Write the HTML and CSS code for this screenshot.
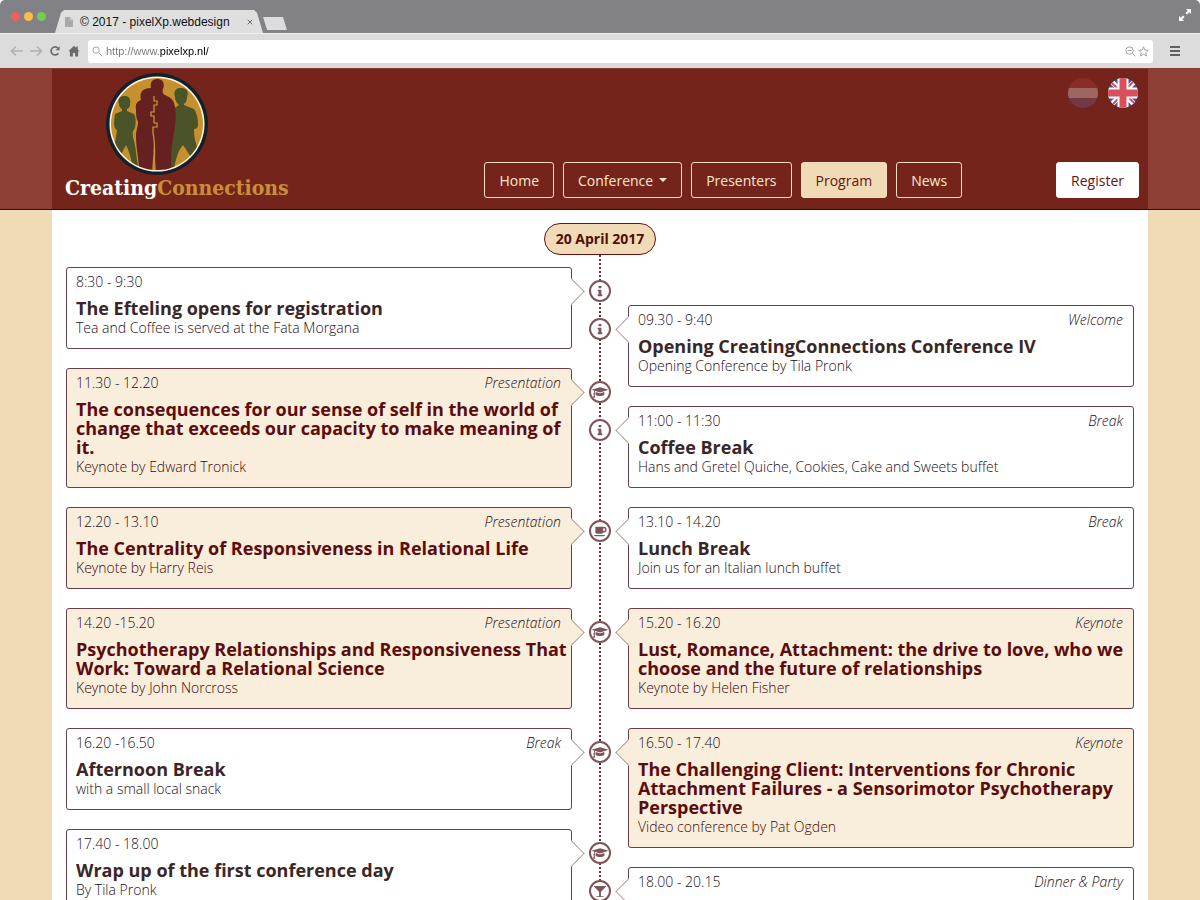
FILE: index.html
```html
<!DOCTYPE html>
<html lang="en">
<head>
<meta charset="utf-8">
<title>Creating Connections - Program</title>
<link rel="stylesheet" href="styles.css">
</head>
<body>
<svg class="sprite" aria-hidden="true">
  <symbol id="info" viewBox="-576 0 1792 1792"><path d="M640 1344v128q0 26-19 45t-45 19h-512q-26 0-45-19t-19-45v-128q0-26 19-45t45-19h64v-384h-64q-26 0-45-19t-19-45v-128q0-26 19-45t45-19h384q26 0 45 19t19 45v576h64q26 0 45 19t19 45zm-128-1152v192q0 26-19 45t-45 19h-256q-26 0-45-19t-19-45v-192q0-26 19-45t45-19h256q26 0 45 19t19 45z"/></symbol>
  <symbol id="cap" viewBox="0 0 2304 1792"><path d="M1774 836l18 316q4 69-82 128t-235 93.5-323 34.5-323-34.5-235-93.5-82-128l18-316 574 181q22 7 48 7t48-7zm530-324q0 23-22 31l-1120 352q-4 1-10 1t-10-1l-652-206q-43 34-71 111.5t-34 178.5q63 36 63 109 0 69-58 107l58 433q2 14-8 25-9 11-24 11h-192q-15 0-24-11-10-11-8-25l58-433q-58-38-58-107 0-73 65-111 11-207 98-330l-333-104q-22-8-22-31t22-31l1120-352q4-1 10-1t10 1l1120 352q22 8 22 31z"/></symbol>
  <symbol id="cup" viewBox="0 0 14 14"><path fill-rule="evenodd" d="M2 2h9a3 3 0 0 1 0 6h-.6A2 2 0 0 1 8.500 9.500h-4.500a2 2 0 0 1-2-2zM10.500 3.500v3h.5a1.500 1.500 0 0 0 0-3zM.5 10.800h12a1.500 1.500 0 0 1-1.500 1.200H2a1.500 1.500 0 0 1-1.500-1.200z"/></symbol>
  <symbol id="glass" viewBox="0 0 14 14"><path d="M1 1h12c.5 0 .6.5.3.900L8 7.300v4.700h2.500c.6 0 .8 1 .2 1H3.300c-.6 0-.4-1 .2-1H6V7.300L.7 1.900C.4 1.500.5 1 1 1z"/></symbol>
</svg>

<div class="browser">
  <div class="titlebar">
    <div class="lights"><i class="light red"></i><i class="light amber"></i><i class="light green"></i></div>
    <div class="tab">
      <svg class="page-icon" viewBox="0 0 8 10"><path d="M0 0h5l3 3v7H0z" fill="#a9a9a9"/><path d="M5 0v3h3" fill="#d2d2d2"/></svg>
      <span class="tab-title">© 2017 - pixelXp.webdesign</span>
      <button class="tab-close" aria-label="Close tab"><svg viewBox="0 0 6 6"><path d="M.7.7l4.600 4.600M5.300.7L.7 5.300"/></svg></button>
    </div>
    <button class="new-tab" aria-label="New tab"></button>
    <button class="expand" aria-label="Full screen"><svg viewBox="0 0 14 14"><path d="M8 1h5v5l-1.700-1.700L9 6.600 7.400 5l2.300-2.300zM6 13H1V8l1.700 1.700L5 7.400 6.600 9l-2.300 2.300z" fill="#fff"/></svg></button>
  </div>
  <div class="toolbar">
    <button class="tool" aria-label="Back"><svg viewBox="0 0 14 12"><path d="M13 6H1.500M6 1.500L1.500 6 6 10.500" class="faint"/></svg></button>
    <button class="tool" aria-label="Forward"><svg viewBox="0 0 14 12"><path d="M1 6h11.500M8 1.500L12.500 6 8 10.500" class="faint"/></svg></button>
    <button class="tool" aria-label="Reload"><svg viewBox="0 0 12 12"><path d="M9 3.200A4 4 0 1 0 9.400 8.200" fill="none" stroke="#6b6b6b" stroke-width="1.700"/><path d="M10.600 1.200v4H6.600z" fill="#6b6b6b"/></svg></button>
    <button class="tool" aria-label="Home page"><svg viewBox="0 0 12 12"><path d="M6 .8L.4 6.200h1.500V11.500h3V8h2.200v3.500h3V6.200h1.500L9.800 4.400V1.500H8.200v1.400z" fill="#6b6b6b"/></svg></button>
    <div class="address">
      <svg class="search" viewBox="0 0 12 12"><circle cx="4.500" cy="4.500" r="3.500"/><path d="M7.200 7.200l4 4"/></svg>
      <input class="url" type="text" value="http://www.pixelxp.nl/" aria-label="Address">
      <svg class="search" viewBox="0 0 12 12"><circle cx="5" cy="5" r="4"/><path d="M3 5h4M8 8l3.200 3.200"/></svg>
      <svg class="star" viewBox="0 0 12 12"><path d="M6 .9l1.500 3.500 3.800.3-2.900 2.500.9 3.700L6 8.900l-3.300 2 .9-3.700L.7 4.700l3.800-.3z"/></svg>
    </div>
    <button class="menu" aria-label="Menu"><i></i><i></i><i></i></button>
  </div>

  <div class="site">
    <header class="banner">
      <div class="banner-inner">
        <a class="logo" href="#">
          <svg class="logo-mark" viewBox="0 0 102 102" aria-hidden="true">
            <circle cx="51" cy="51" r="51" fill="#14202a"/>
            <circle cx="51" cy="51" r="47.500" fill="#fff8e4"/>
            <clipPath id="disc"><circle cx="51" cy="51" r="46"/></clipPath>
            <g clip-path="url(#disc)">
              <rect width="102" height="102" fill="#c6902f"/>
              <path fill="#4b5328" d="M13 31c-2-5 1-8 6-8 4 0 6 3 5 8 0 3-1 4-3 5v2l7 3c2 3 2 8 1 14l-2 3c-1 5 1 9 2 14l3 22-6-2c-1-8-3-14-6-20-4 7-6 12-7 18L4 84c4-9 6-17 7-27-4-2-3-7-2-16l7-3v-2c-2-1-3-3-3-5z"/>
              <path fill="#4b5328" d="M69 24c-2-6 1-9 6-9 6 0 8 4 6 9 0 4-1 5-3 7v1l10 4c3 4 4 10 4 16 0 3-2 4-4 4 0 8 1 14 6 24l-7 8c-4-7-7-12-10-16-5 6-7 13-9 24l-10 3c2-10 4-19 6-27 2-6 1-11 2-18-3-5-2-14 1-18l6-4c-2-2-4-4-4-8z"/>
              <path fill="#65201f" d="M45 15c-1-5 1-9 6-9 6 0 8 4 6 10-1 3 0 5 2 6 4 2 7 3 9 8 2 6 2 14 1 24l-3 18c-1 9-1 16-1 27H33c0-14-3-23-3-36 0-6 2-9 2-14-2-4-2-8-2-13-1-4 1-8 5-9-2-8 2-12 10-12z"/>
              <path fill="none" stroke="#d49a38" stroke-width="1.200" d="M48 23v5h3v4h-3v7h-3v4h3v7h3v4h-4v6c2 8 2 20 1 40"/>
              <path fill="#c6902f" d="M48 72l2 28h-4z"/>
            </g>
          </svg>
          <span class="wordmark">Creating<span class="gold">Connections</span></span>
        </a>
        <div class="banner-side">
          <div class="flags">
            <a class="flag dim" href="#" aria-label="Nederlands"><svg viewBox="0 0 30 30"><clipPath id="nl"><circle cx="15" cy="15" r="15"/></clipPath><g clip-path="url(#nl)"><path fill="#b94346" d="M0 0h30v10H0z"/><path fill="#fff" d="M0 10h30v10H0z"/><path fill="#6a67ad" d="M0 20h30v10H0z"/></g></svg></a>
            <a class="flag" href="#" aria-label="English"><svg viewBox="0 0 30 30"><clipPath id="uk"><circle cx="15" cy="15" r="15"/></clipPath><g clip-path="url(#uk)"><path fill="#3a5aa9" d="M0 0h30v30H0z"/><path stroke="#fff" stroke-width="5" d="M0 0l30 30M30 0L0 30"/><path stroke="#d8505c" stroke-width="2" d="M0 1l14 14M30 29L16 15M29 0L15 14M1 30l14-14"/><path stroke="#fff" stroke-width="11" d="M15 0v30M0 15h30"/><path stroke="#d8505c" stroke-width="7" d="M15 0v30M0 15h30"/></g></svg></a>
          </div>
          <nav class="nav">
            <a class="nav-item" href="#">Home</a>
            <button class="nav-item">Conference <i class="caret"></i></button>
            <a class="nav-item" href="#">Presenters</a>
            <a class="nav-item active" href="#">Program</a>
            <a class="nav-item" href="#">News</a>
            <a class="nav-item register" href="#">Register</a>
          </nav>
        </div>
      </div>
    </header>

    <main class="content">
      <h1 class="day">20 April 2017</h1>
      <div class="timeline">
        <div class="column left">
          <article class="card">
            <p class="meta"><time>8:30 - 9:30</time></p>
            <h2>The Efteling opens for registration</h2>
            <p>Tea and Coffee is served at the Fata Morgana</p>
            <span class="node"><svg><use href="#info"/></svg></span>
          </article>
          <article class="card talk">
            <p class="meta"><time>11.30 - 12.20</time><em>Presentation</em></p>
            <h2>The consequences for our sense of self in the world of change that exceeds our capacity to make meaning of it.</h2>
            <p>Keynote by Edward Tronick</p>
            <span class="node"><svg><use href="#cap"/></svg></span>
          </article>
          <article class="card talk">
            <p class="meta"><time>12.20 - 13.10</time><em>Presentation</em></p>
            <h2>The Centrality of Responsiveness in Relational Life</h2>
            <p>Keynote by Harry Reis</p>
          </article>
          <article class="card talk">
            <p class="meta"><time>14.20 -15.20</time><em>Presentation</em></p>
            <h2>Psychotherapy Relationships and Responsiveness That Work: Toward a Relational Science</h2>
            <p>Keynote by John Norcross</p>
          </article>
          <article class="card">
            <p class="meta"><time>16.20 -16.50</time><em>Break</em></p>
            <h2>Afternoon Break</h2>
            <p>with a small local snack</p>
          </article>
          <article class="card">
            <p class="meta"><time>17.40 - 18.00</time></p>
            <h2>Wrap up of the first conference day</h2>
            <p>By Tila Pronk</p>
            <span class="node"><svg><use href="#cap"/></svg></span>
          </article>
        </div>
        <div class="spine"></div>
        <div class="column right">
          <article class="card">
            <p class="meta"><time>09.30 - 9:40</time><em>Welcome</em></p>
            <h2>Opening CreatingConnections Conference IV</h2>
            <p>Opening Conference by Tila Pronk</p>
            <span class="node"><svg><use href="#info"/></svg></span>
          </article>
          <article class="card">
            <p class="meta"><time>11:00 - 11:30</time><em>Break</em></p>
            <h2>Coffee Break</h2>
            <p>Hans and Gretel Quiche, Cookies, Cake and Sweets buffet</p>
            <span class="node"><svg><use href="#info"/></svg></span>
          </article>
          <article class="card">
            <p class="meta"><time>13.10 - 14.20</time><em>Break</em></p>
            <h2>Lunch Break</h2>
            <p>Join us for an Italian lunch buffet</p>
            <span class="node"><svg><use href="#cup"/></svg></span>
          </article>
          <article class="card talk">
            <p class="meta"><time>15.20 - 16.20</time><em>Keynote</em></p>
            <h2>Lust, Romance, Attachment: the drive to love, who we choose and the future of relationships</h2>
            <p>Keynote by Helen Fisher</p>
            <span class="node"><svg><use href="#cap"/></svg></span>
          </article>
          <article class="card talk">
            <p class="meta"><time>16.50 - 17.40</time><em>Keynote</em></p>
            <h2>The Challenging Client: Interventions for Chronic Attachment Failures - a Sensorimotor Psychotherapy Perspective</h2>
            <p>Video conference by Pat Ogden</p>
            <span class="node"><svg><use href="#cap"/></svg></span>
          </article>
          <article class="card">
            <p class="meta"><time>18.00 - 20.15</time><em>Dinner &amp; Party</em></p>
            <span class="node"><svg><use href="#glass"/></svg></span>
          </article>
        </div>
      </div>
    </main>
  </div>
</div>
</body>
</html>
```

FILE: styles.css
```css
* { box-sizing: border-box; }

body {
  margin: 0;
  background: #fff;
  font: 14px/19px "Open Sans", "Noto Sans", sans-serif;
}

button { margin: 0; padding: 0; border: 0; background: none; font: inherit; }
a { text-decoration: none; }
svg { display: block; }
.sprite { display: none; }

.browser {
  display: flex;
  flex-direction: column;
  height: 100vh;
  overflow: hidden;
  border-radius: 5px 5px 0 0;
}

/* Window chrome */
.titlebar {
  display: flex;
  align-items: flex-end;
  flex: none;
  height: 33px;
  background: #828186;
}
.lights { display: flex; gap: 4px; padding: 0 9px 12px 11px; }
.light { width: 9px; height: 9px; border-radius: 50%; }
.red { background: #f0605a; }
.amber { background: #fbbc4b; }
.green { background: #74ce4e; }
.tab {
  display: flex;
  align-items: center;
  width: 208px;
  height: 23px;
  padding: 0 10px;
  background: #dfdfdf;
  clip-path: polygon(0 100%, 6px 12%, 9px 0, 199px 0, 202px 12%, 100% 100%);
}
.page-icon { width: 8px; height: 10px; margin-right: 7px; }
.tab-title { flex: 1; font: 12px/14px "Liberation Sans", Arial, sans-serif; color: #111; white-space: nowrap; }
.tab-close svg { width: 6px; height: 6px; stroke: #6a6a6a; fill: none; }
.new-tab {
  width: 24px;
  height: 13px;
  margin-bottom: 3px;
  background: #dcdcdc;
  clip-path: polygon(0 0, 83% 0, 100% 100%, 17% 100%);
}
.expand { margin: 0 8px 11px auto; }
.expand svg { width: 14px; height: 14px; }

.toolbar {
  display: flex;
  align-items: center;
  flex: none;
  height: 35px;
  padding: 0 20px 0 10px;
  background: #dcdcdc;
  border-top: 1px solid #f2f2f2;
}
.tool { margin-right: 5px; }
.tool svg { width: 14px; height: 12px; }
.faint { fill: none; stroke: #b0b0b0; stroke-width: 1.6; }
.address {
  display: flex;
  align-items: center;
  gap: 2px;
  flex: 1;
  height: 23px;
  margin-left: 2px;
  padding: 0 4px;
  background: #fff;
  border-radius: 3px;
}
.search, .star { width: 11px; height: 11px; fill: none; stroke: #9a9a9a; }
.url {
  flex: 1;
  min-width: 0;
  height: 18px;
  padding: 0 0 0 1px;
  border: 0;
  font: 11px/18px "Liberation Sans", Arial, sans-serif;
  color: transparent;
  background: linear-gradient(90deg, #777 55px, #000 55px, #000 103px, #555 103px) text;
}
.menu { display: flex; flex-direction: column; gap: 2px; margin-left: 17px; }
.menu i { width: 10px; height: 2px; background: #606060; }

/* Site header */
.site { flex: 1; min-height: 0; display: flex; flex-direction: column; overflow: hidden; background: #f1dbb6; }
.banner { flex: none; background: #8f4036; border-bottom: 1px solid #3a0806; border-top: 1px solid #8a3a30; }
.banner-inner {
  display: flex;
  justify-content: space-between;
  max-width: 1096px;
  margin: 0 auto;
  padding: 4px 9px 7px 13px;
  background: #75241b;
}
.logo { display: flex; flex-direction: column; color: #fff; }
.logo-mark { width: 102px; height: 102px; margin-left: 41px; }
.wordmark { padding-bottom: 2px; font: bold 21px/25px "DejaVu Serif Condensed", "DejaVu Serif", serif; }
.gold { color: #c98f38; }
.banner-side { display: flex; flex-direction: column; justify-content: space-between; align-items: flex-end; padding: 5px 0 4px; }
.flags { display: flex; gap: 10px; padding-right: 1px; }
.flag svg { width: 30px; height: 30px; }
.dim { opacity: .3; }
.nav { display: flex; gap: 9px; }
.nav-item {
  display: flex;
  align-items: center;
  height: 36px;
  padding: 0 14px;
  border: 1px solid #f6dfc4;
  border-radius: 3px;
  color: #fbe9d3;
  font-size: 14px;
}
.active { background: #f1dbb6; color: #641414; }
.register { margin-left: 85px; background: #fff; border-color: #fff; color: #641414; }
.caret { margin-left: 6px; border: 4px solid transparent; border-top-color: currentColor; border-bottom: 0; }

/* Program */
.content {
  flex: 1;
  width: 100%;
  max-width: 1096px;
  min-height: 0;
  margin: 0 auto;
  padding: 13px 14px 0;
  background: #fff;
  overflow: hidden;
}
.day {
  width: fit-content;
  margin: 0 auto;
  padding: 0 11px;
  border: 1px solid #641414;
  border-radius: 16px;
  background: #f1dbb6;
  color: #4f0f0d;
  font-size: 14px;
  font-weight: 700;
  line-height: 30px;
}
.timeline { display: grid; grid-template-columns: 1fr 56px 1fr; }
.column { display: flex; flex-direction: column; gap: 19px; padding-top: 12px; }
.right { padding-top: 50px; }
.spine { justify-self: center; border-left: 2px dotted #5b2a33; }

.card {
  position: relative;
  min-height: 82px;
  padding: 4px 10px 11px 9px;
  border: 1px solid #6b3d47;
  border-radius: 3px;
  background: #fff;
  color: #1c0d18;
  font-weight: 300;
}
.card p { margin: 0; }
.card h2 { margin: 8px -8px 0 0; font-size: 18px; font-weight: 700; line-height: 19px; color: #3a2626; }
.meta { display: flex; justify-content: space-between; }
.talk { background: #f9eedb; color: #420606; }
.talk .meta { color: #1c0d18; }
.talk h2 { color: #5c0c0c; }

/* Pointer from the card towards the spine */
.card::after {
  content: "";
  position: absolute;
  top: 14px;
  width: 18px;
  height: 18px;
  background: inherit;
  border: 1px solid #a08a8a;
  border-left: 0;
  border-bottom: 0;
  clip-path: polygon(0 0, 100% 0, 100% 100%, 80% 100%, 0 20%);
}
.left .card::after { right: -10px; transform: rotate(45deg); }
.right .card::after { left: -10px; transform: rotate(225deg); }

.node {
  position: absolute;
  top: 12px;
  z-index: 1;
  display: grid;
  place-items: center;
  width: 22px;
  height: 22px;
  border: 2px solid #7d5558;
  border-radius: 50%;
  background: #fff;
}
.left .node { right: -40px; }
.right .node { left: -40px; }
.node svg { width: 16px; height: 13px; fill: #7d5558; }
```
